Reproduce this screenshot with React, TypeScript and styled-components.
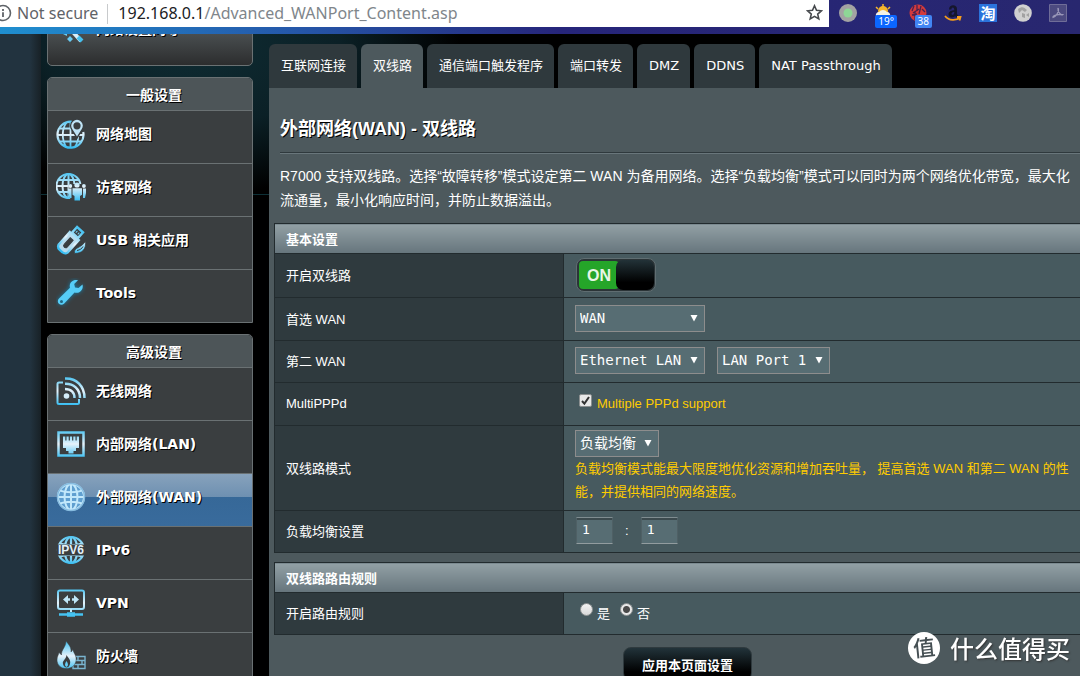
import React, { useState } from "react";
import styled, { createGlobalStyle } from "styled-components";

const sans = `"Liberation Sans", "Noto Sans CJK SC", sans-serif`;
const verdana = `"DejaVu Sans", "Noto Sans CJK SC", sans-serif`;
const mono = `"DejaVu Sans Mono", "Noto Sans CJK SC", monospace`;

const GlobalStyle = createGlobalStyle`
  *, *::before, *::after { box-sizing: border-box; }
  body { margin: 0; background: #21313c; font-family: ${sans}; color: #fff; }
  button, input, select { font: inherit; color: inherit; }
  svg text { text-shadow: none; }
`;

const Window = styled.div`
  display: flex;
  flex-direction: column;
  height: 100vh;
  overflow: hidden;
`;

/* ---------- browser bar ---------- */

const BrowserBar = styled.header`
  display: flex;
  flex: none;
  height: 34px;
  padding-bottom: 7px;
  background: linear-gradient(90deg, #1f8fd0 0, #2556a8 300px, #26257a 560px, #28276f 100%);
`;

const AddressBar = styled.div`
  display: flex;
  flex: 1;
  align-items: center;
  min-width: 0;
  padding-right: 6px;
  background: #fff;
  color: #5f6368;
  font: 16px/26px "Noto Sans", sans-serif;
`;

const InfoMark = styled.svg`
  flex: none;
  width: 18px;
  height: 18px;
  margin: 0 5px 2px -6px;
`;

const Secure = styled.span`
  padding: 0 9px 2px 0;
  border-right: 1px solid #c8cacc;
  line-height: 18px;
  white-space: nowrap;
`;

const Url = styled.span`
  flex: 1;
  padding: 0 0 2px 10px;
  color: #80868b;
  white-space: nowrap;
  b { color: #202124; font-weight: 400; }
`;

const StarButton = styled.button`
  display: flex;
  padding: 0 0 2px;
  border: 0;
  background: none;
`;

const Extensions = styled.div`
  display: flex;
  gap: 17px;
  align-items: center;
  padding: 0 13px 2px 10px;
`;

const Extension = styled.button`
  position: relative;
  width: 18px;
  height: 18px;
  padding: 0;
  border: 0;
  background: none;
  svg { display: block; width: 18px; height: 18px; }
`;

const Badge = styled.span<{ $color: string }>`
  position: absolute;
  top: 11px;
  right: -5px;
  padding: 0 3px;
  border-radius: 2px;
  background: ${(p) => p.$color};
  color: #fff;
  font: 10px/13px "Noto Sans", sans-serif;
`;

const Taobao = styled.span`
  display: block;
  height: 18px;
  background: #2b73dc;
  color: #fff;
  font: 700 15px/17px "Noto Sans CJK SC", sans-serif;
`;

/* ---------- page ---------- */

const Page = styled.div`
  display: flex;
  flex: 1;
  min-height: 0;
  overflow: hidden;
  padding-left: 41px;
  background: linear-gradient(90deg, #22333f 0, #22333f 30px, #182126 41px, transparent 41px);
`;

const Board = styled.div`
  display: flex;
  flex: 1;
  gap: 16px;
  align-items: flex-start;
  min-width: 0;
  padding-left: 6px;
  background:
    linear-gradient(#0d3036, #0d3036) 0 160px / 230px 1px no-repeat,
    radial-gradient(ellipse 270px 150px at 150px 10px, #0f2c33 0, #0b2026 55%, transparent 100%),
    #000;
`;

const Sidebar = styled.nav`
  display: flex;
  flex: none;
  flex-direction: column;
  gap: 11px;
  width: 206px;
  margin-top: -22px;
`;

const Group = styled.section`
  overflow: hidden;
  border: 1px solid #6a7173;
  border-radius: 5px 5px 0 0;
`;

const GroupTitle = styled.h2`
  margin: 0;
  padding: 2px 0 0 8px;
  background: #4d5558;
  font: 700 14px/30px ${verdana};
  text-align: center;
  text-shadow: 1px 1px 0 #000;
`;

const MenuLink = styled.a<{ $kind?: "active" | "lone" }>`
  display: flex;
  gap: 10px;
  align-items: center;
  height: 53px;
  padding: 0 8px 7px;
  border-top: 1px solid #6a7173;
  background: ${(p) =>
    p.$kind === "active"
      ? "linear-gradient(#87a2bc 0, #6e90b1 44%, #366898 45%, #396b9c 100%)"
      : p.$kind === "lone"
        ? "linear-gradient(#5c6466, #2c2d2e)"
        : "#3a3e40"};
  color: #fff;
  font: 700 14px/20px ${verdana};
  text-decoration: none;
  text-shadow: 1px 1px 0 #000;
  ${(p) =>
    p.$kind === "lone" &&
    "height: 54px; padding-bottom: 21px; border: 1px solid #6a7173; border-radius: 5px;"}
  svg { flex: none; width: 30px; height: 30px; }
`;

const Main = styled.main`
  flex: 1 0 828px;
  padding-top: 10px;
`;

const Tabs = styled.nav`
  display: flex;
  gap: 4px;
`;

const Tab = styled.a<{ $active?: boolean }>`
  height: 44px;
  padding: 0 11px 0 12px;
  border-radius: 6px 6px 0 0;
  background: ${(p) => (p.$active ? "#4d595d" : "#2f393d")};
  color: #fff;
  font: 13px/43px ${verdana};
  text-decoration: none;
  white-space: nowrap;
`;

const Panel = styled.form`
  padding: 29px 11px 40px 5px;
  background: #4d595d;
`;

const Title = styled.h1`
  margin: 0 0 0 6px;
  padding-bottom: 11px;
  border-bottom: 1px solid #2f393d;
  box-shadow: 0 1px 0 #69767b;
  font: 700 18px/24px ${sans};
  text-shadow: 1px 1px 0 #000;
`;

const Intro = styled.p`
  margin: 11px 12px 11px 6px;
  font-size: 14px;
  line-height: 24px;
`;

const Settings = styled.table`
  width: 100%;
  margin-bottom: 9px;
  border: 1px solid #222b2e;
  border-collapse: collapse;
  background: #475a5f;
  font-size: 13px;
  text-align: left;
`;

const SectionHead = styled.th`
  height: 30px;
  padding: 0 0 0 11px;
  background: linear-gradient(#92a0a5, #66757c);
  font-weight: 700;
`;

const Row = styled.tr`
  border-top: 1px solid #222b2e;
`;

const Label = styled.th`
  width: 289px;
  padding: 0 0 2px 11px;
  border-right: 1px solid #222b2e;
  background: #2f3a3e;
  font-weight: 400;
`;

const Value = styled.td<{ $height?: number }>`
  height: ${(p) => p.$height ?? 43}px;
  padding: 0 5px 2px 11px;
`;

const Controls = styled.div<{ $gap?: number; $indent?: number }>`
  display: flex;
  gap: ${(p) => p.$gap ?? 12}px;
  align-items: center;
  padding-left: ${(p) => p.$indent ?? 0}px;
`;

const SelectBox = styled.span<{ $width: number }>`
  position: relative;
  display: block;
  width: ${(p) => p.$width}px;
  select {
    display: block;
    width: 100%;
    height: 27px;
    padding: 0 4px 1px;
    border: 1px solid #8d8d8d;
    border-radius: 0;
    outline: 0;
    appearance: none;
    background: #576d73;
    font: 14px/20px ${mono};
  }
  svg {
    position: absolute;
    top: 9px;
    right: 7px;
    width: 8px;
    height: 8px;
    pointer-events: none;
  }
`;

const Switch = styled.button`
  display: flex;
  width: 80px;
  height: 34px;
  margin-left: 1px;
  padding: 1px;
  border: 1px solid #5f6d71;
  border-radius: 8px;
  background: #2b3437;
  span {
    flex: 1;
    margin: 1px -3px 1px 1px;
    border-radius: 4px;
    background: #25a529;
    color: #e8f6e6;
    font: 700 16px/29px ${sans};
    text-align: center;
  }
  i {
    z-index: 1;
    width: 38px;
    border-radius: 7px;
    background: linear-gradient(#223238, #000 75%);
  }
`;

const CheckLabel = styled.label<{ $plain?: boolean }>`
  display: flex;
  gap: ${(p) => (p.$plain ? 4 : 5)}px;
  align-items: center;
  color: ${(p) => (p.$plain ? "#fff" : "#ffcc00")};
  input {
    width: 13px;
    height: 13px;
    margin: 0 0 6px;
    border: 1px solid #8b8f90;
    border-radius: 2px;
    appearance: none;
    background: linear-gradient(#f4f4f4, #d8d8d8);
  }
  input[type="checkbox"]:checked {
    background: url("data:image/svg+xml,%3Csvg xmlns='http://www.w3.org/2000/svg' viewBox='0 0 11 11'%3E%3Cpath d='M2 6l2.4 2.6L9 2' fill='none' stroke='%23333' stroke-width='2'/%3E%3C/svg%3E") #e8e8e8;
  }
  input[type="radio"] { border-radius: 50%; }
  input[type="radio"]:checked {
    background: radial-gradient(circle, #4a4a4a 0, #4a4a4a 3px, #e8e8e8 4px);
  }
`;

const Hint = styled.p`
  margin: 0;
  color: #ffcc00;
  line-height: 23px;
`;

const ModeStack = styled.div`
  padding: 4px 0 5px;
`;

const Ratio = styled.input`
  width: 37px;
  height: 27px;
  padding: 0 5px 2px;
  border: 1px solid #4f6065;
  border-top-color: #7f8c90;
  border-bottom-color: #929c9f;
  outline: 0;
  background: #576d73;
  box-shadow: inset 0 2px 0 #3c4a4e;
  font-family: ${mono};
`;

const Actions = styled.div`
  display: flex;
  padding: 3px 0 0 349px;
`;

const Apply = styled.button`
  min-width: 129px;
  height: 34px;
  border: 1px solid #2f3a3e;
  border-radius: 8px;
  background: linear-gradient(#22333a, #000 75%);
  font-weight: 700;
  font-size: 13px;
`;

const Watermark = styled.div`
  position: fixed;
  right: 10px;
  bottom: 12px;
  display: flex;
  gap: 10px;
  align-items: center;
  font: 500 24px/32px "Noto Sans CJK SC", sans-serif;
  text-shadow: 1px 1px 2px #333;
  svg { width: 32px; height: 32px; }
`;

/* ---------- icons ---------- */

const stroke = { fill: "none", stroke: "url(#ice)", strokeWidth: 2 };

const Defs = styled.svg`
  position: absolute;
  width: 0;
  height: 0;
`;

const IceDefs = () => (
  <Defs aria-hidden="true">
    <defs>
      <linearGradient id="ice" gradientUnits="userSpaceOnUse" x1="0" y1="1" x2="0" y2="29">
        <stop offset="0" stopColor="#4cc4f2" />
        <stop offset="0.5" stopColor="#e6f2fa" />
        <stop offset="1" stopColor="#35bdf2" />
      </linearGradient>
    </defs>
  </Defs>
);

const Globe = () => (
  <>
    <circle cx="15" cy="15" r="13" />
    <ellipse cx="15" cy="15" rx="6.500" ry="13" />
    <path d="M15 2v26M2 15h26M4 8.600c6 2.200 16 2.200 22 0M4 21.400c6-2.200 16-2.200 22 0" />
  </>
);

const icons: Record<string, React.ReactNode> = {
  wand: (
    <>
      <path d="M9 9l16 18" stroke="#d8eefa" strokeWidth="4" />
      <path d="M22 23l4 4" stroke="#46c0ee" strokeWidth="4" />
      <path d="M2 17h9v5l-4-2z M14 22l3 3-3 3-3-3z M20 13l2 2-2 2-2-2z" fill="#67cbf3" />
    </>
  ),
  map: (
    <>
      <g {...stroke} strokeWidth={2.200}>
        <path d="M16 2.800A13 13 0 1 0 27.200 13" />
        <path d="M14.500 3v26M10.500 3.500c-5 7-5 17 0 25M18.500 28.500c3.500-5 4.400-10 3.200-15M1.500 16H28M4 9.500h13M4 22.500h21" strokeWidth="1.800" />
      </g>
      <path d="M21 17.500l-4.500-7.500a5.500 5.500 0 1 1 9 0z" fill="#3a3e40" stroke="#3a3e40" strokeWidth="3" />
      <path fillRule="evenodd" d="M21 17.500l-4.600-7.300a5.800 5.800 0 1 1 9.200 0zM21 3.200a3.600 3.600 0 1 0 0 7.200a3.600 3.600 0 0 0 0-7.200z" fill="#bfe3f5" />
    </>
  ),
  guest: (
    <>
      <g {...stroke} strokeWidth={2}>
        <circle cx="12.500" cy="14" r="12" />
        <ellipse cx="12.500" cy="14" rx="6" ry="12" />
        <path d="M12.500 2v24M.5 14h24M2.500 8h20M2.500 20h20" />
      </g>
      <path d="M13 12h17v16H15l-3-6z" fill="#3a3e40" />
      <g fill="url(#ice)">
        <circle cx="21" cy="13" r="2.600" />
        <path d="M16.500 16.300h9.500v6.500l-2 1.200v4.500h-5.500V24l-2-1.200zM12 16.500h3.500v9.500h-2l-1.500-5zM27 16.500h3v4.500l-1 5h-2z" />
        <circle cx="14.300" cy="14" r="1.900" />
        <circle cx="27.900" cy="14" r="1.900" />
      </g>
    </>
  ),
  usb: (
    <>
      <g transform="rotate(42 13 17)" {...stroke} strokeWidth={2.400}>
        <path d="M9 .5h8V8H9z" />
        <path d="M11.300 4.300h1M13.900 4.300h1" />
        <path d="M7 9h12v15a4 4 0 0 1-4 5h-4a4 4 0 0 1-4-5z" fill="#b9dcee" />
        <path d="M11 13h4v9a2 2 0 0 1-4 0z" fill="#3a3e40" stroke="#3a3e40" strokeWidth="1" />
      </g>
      <path d="M29.500 16c1 8-3 12.500-11 12.500-1.500-6.500 7-5 11-12.500z" fill="url(#ice)" stroke="#3a3e40" strokeWidth=".8" />
      <path d="M21 25.500c3-.5 5-2 6-4" fill="none" stroke="#3a3e40" />
    </>
  ),
  tools: (
    <path
      d="M26.500 6.500l-4 3.500-3.500-.6-.8-3.500L22 2.300c-5-1.300-9.300 2.600-8 7.500L3 20.500c-3.500 3.500 1.500 8.500 5 5.200L18.500 14.500c5 1.500 9.400-3 8-8zM5.500 22a1.500 1.500 0 1 1 0 3a1.500 1.500 0 0 1 0-3z"
      fill="#56cdf7"
      fillRule="evenodd"
      filter="drop-shadow(0 0 2px #1481ad)"
    />
  ),
  wifi: (
    <g {...stroke} strokeWidth={2}>
      <path d="M7 6.500H3q-1.500 0-1.500 1.500v18.500q0 1.500 1.500 1.500h18.500q1.500 0 1.500-1.500V23" />
      <path d="M9 2.500C20.500 2 28.500 10 28.500 22M9 7.800C17.500 7.500 24 13 24 22M9 13c6 0 9.500 3.500 9.500 9" strokeWidth="2.500" />
      <circle cx="10.500" cy="20" r="2.800" fill="#d5ecf8" stroke="none" />
    </g>
  ),
  lan: (
    <>
      <path d="M2.500 3.500h25v23h-25z" {...stroke} strokeWidth={2.500} />
      <path
        d="M7 7.500h2.300v4h1.200v-4h2.200v4h1.200v-4h2.200v4h1.200v-4h2.200v4h1.200v-4H23V19h-3v3h-2.500v2.500h-5V22H10v-3H7z"
        fill="url(#ice)"
      />
    </>
  ),
  wan: (
    <>
      <circle cx="15" cy="15" r="13" fill="#5f9fd0" />
      <g fill="none" stroke="#c2e8fb" strokeWidth="2">
        <Globe />
      </g>
      <circle cx="15" cy="15" r="13.500" fill="none" stroke="#86bce0" strokeWidth="1.500" />
    </>
  ),
  ipv6: (
    <>
      <g {...stroke} strokeWidth={2.200}>
        <Globe />
      </g>
      <path d="M1 9.500h28v11H1z" fill="#3a3e40" />
      <text x="15" y="19" textAnchor="middle" fontFamily="Liberation Sans" fontWeight="700" fontSize="12" fill="#e3f1f9">
        IPV6
      </text>
    </>
  ),
  vpn: (
    <>
      <rect x="2" y="2.500" width="26" height="18.500" rx="2" {...stroke} />
      <path d="M7 11.500l5-4.500v3.200h2v2.600h-2V16zM23 11.500l-5-4.500v3.200h-2v2.600h2V16z" fill="#bfe6f8" />
      <path d="M14 21h2v3h-2z" fill="#bfe6f8" />
      <path d="M3 26.500h24" stroke="#45c3f2" strokeWidth="2.500" />
      <path d="M11 26.500h8" stroke="#45c3f2" strokeWidth="4.500" />
    </>
  ),
  firewall: (
    <>
      <path d="M17 15.500h12v12H17zM17 19.500h12M17 23.500h12M22 15.500v4M26 19.500v4M22 23.500v4" fill="none" stroke="#79b4cf" strokeWidth="1.400" />
      <path
        fill="url(#ice)"
        stroke="#3a3e40"
        strokeWidth=".5"
        d="M10 0c3 4 5.500 6.500 5 11l2-2.500c0 3 4 6 3 11.500-1 5-5 7.500-10 7.500S1 24 1 19c0-3.500 1.500-5 2-7.500l2.500 2.500C5 9 10 6 10 0z"
      />
      <path fill="#3a3e40" d="M10.500 14c2 3.500 4.500 5 3.500 9-.6 2.500-2 3.500-3.500 3.500S7.500 25 7 23c-1-3.500 3-4 3.500-9z" />
      <path fill="#62cdf5" d="M10.500 20c2 3 2 5 0 6-2-1-2-3 0-6z" />
    </>
  ),
};

const Icon = ({ name }: { name: string }) => (
  <svg viewBox="0 0 30 30" aria-hidden="true">
    {icons[name]}
  </svg>
);

const Select = ({ width, label, options }: { width: number; label: string; options: string[] }) => (
  <SelectBox $width={width}>
    <select aria-label={label}>
      {options.map((o) => (
        <option key={o}>{o}</option>
      ))}
    </select>
    <svg viewBox="0 0 8 8" aria-hidden="true">
      <path d="M.5 1h7L4 7.500z" fill="#fff" />
    </svg>
  </SelectBox>
);

const general = [
  ["map", "网络地图"],
  ["guest", "访客网络"],
  ["usb", "USB 相关应用"],
  ["tools", "Tools"],
];

const advanced = [
  ["wifi", "无线网络"],
  ["lan", "内部网络(LAN)"],
  ["wan", "外部网络(WAN)"],
  ["ipv6", "IPv6"],
  ["vpn", "VPN"],
  ["firewall", "防火墙"],
];

const tabs = ["互联网连接", "双线路", "通信端口触发程序", "端口转发", "DMZ", "DDNS", "NAT Passthrough"];

const Menu = ({ title, items }: { title: string; items: string[][] }) => (
  <Group>
    <GroupTitle>{title}</GroupTitle>
    {items.map(([icon, text]) => (
      <MenuLink key={icon} href="#" $kind={icon === "wan" ? "active" : undefined}>
        <Icon name={icon} />
        {text}
      </MenuLink>
    ))}
  </Group>
);

const ExtensionBar = () => (
  <Extensions>
    <Extension aria-label="Status">
      <svg viewBox="0 0 18 18">
        <circle cx="9" cy="9" r="9" fill="#a3a3a3" />
        <circle cx="9" cy="9" r="4.500" fill="#8ed796" />
      </svg>
    </Extension>
    <Extension aria-label="Weather">
      <svg viewBox="0 0 18 18">
        <circle cx="9" cy="7" r="5" fill="#f5b52c" />
        <path d="M9 0v3M2 3l2 2M16 3l-2 2" stroke="#f5b52c" strokeWidth="1.500" />
        <path d="M2 12a3 3 0 0 1 3-4 5 5 0 0 1 8 0 3 3 0 0 1 3 4z" fill="#f4f1e6" />
      </svg>
      <Badge $color="#0b66ff">19°</Badge>
    </Extension>
    <Extension aria-label="Notifications">
      <svg viewBox="0 0 18 18">
        <circle cx="9" cy="9" r="8.500" fill="#d33a3c" />
        <path d="M5 2l-2 5M8 1v6M4 9l6-4M12 2l-2 8M13 5l3 3M3 11l5-1M6 8v8" stroke="#4a2250" strokeWidth="1.300" />
      </svg>
      <Badge $color="#4285f4">38</Badge>
    </Extension>
    <Extension aria-label="Amazon">
      <svg viewBox="0 0 18 18">
        <path d="M5 5.500C5 0 13 0 13 5v5l1.500 2-2 1.500-1.500-1.500c-2 2.500-6.500 1.500-6.500-1.500C4.500 7 8 6.500 10.300 6.300 10.500 2.500 7.500 3 7.300 5.500zM10.300 8c-4 0-3 3.500-1.300 2.800 1-.4 1.300-1.300 1.300-2.800z" fill="#15162c" />
        <path d="M1 12c4 5 11 5 15 1.500M13 13h3.500l-1 3.500" fill="none" stroke="#f59d1b" strokeWidth="1.800" />
      </svg>
    </Extension>
    <Extension aria-label="Taobao">
      <Taobao>淘</Taobao>
    </Extension>
    <Extension aria-label="Profile">
      <svg viewBox="0 0 18 18">
        <circle cx="9" cy="9" r="8.800" fill="#d0d0d0" />
        <path d="M4 5c4-3 6-2 9 1l-2 2-3-2-3 3zM8 9l3 1v4l-3-1zM12 11l3-2v4z" fill="#a2a2a2" />
      </svg>
    </Extension>
    <Extension aria-label="Acrobat">
      <svg viewBox="0 0 18 18">
        <path d="M.5.5h17v17H.5z" fill="#4c4a80" stroke="#6f6d98" />
        <path d="M9 4c2 4-3 9-5 9.500-1-2 5-3.500 10-3-1 2-6-3-5-6.500" fill="none" stroke="#9997b8" strokeWidth="1.200" />
      </svg>
    </Extension>
  </Extensions>
);

export default function App() {
  const [on, setOn] = useState(true);
  return (
    <Window>
      <GlobalStyle />
      <IceDefs />
      <BrowserBar>
        <AddressBar>
          <InfoMark viewBox="0 0 18 18">
            <circle cx="9" cy="9" r="7.500" fill="none" stroke="#5f6368" strokeWidth="1.600" />
            <path d="M9 5v2M9 8.200V13" stroke="#5f6368" strokeWidth="1.800" />
          </InfoMark>
          <Secure>Not secure</Secure>
          <Url>
            <b>192.168.0.1</b>/Advanced_WANPort_Content.asp
          </Url>
          <StarButton aria-label="Bookmark this page">
            <svg width="17" height="17" viewBox="0 0 17 17">
              <path d="M8.500 1.800l2 4.500 4.900.5-3.700 3.300 1.100 4.800-4.300-2.500-4.300 2.500 1.100-4.800L1.600 6.800l4.900-.5z" fill="none" stroke="#46494d" strokeWidth="1.600" />
            </svg>
          </StarButton>
        </AddressBar>
        <ExtensionBar />
      </BrowserBar>

      <Page>
        <Board>
          <Sidebar>
            <MenuLink href="#" $kind="lone">
              <Icon name="wand" />
              网络设置向导
            </MenuLink>
            <Menu title="一般设置" items={general} />
            <Menu title="高级设置" items={advanced} />
          </Sidebar>

          <Main>
            <Tabs>
              {tabs.map((t, i) => (
                <Tab key={t} href="#" $active={i === 1}>
                  {t}
                </Tab>
              ))}
            </Tabs>
            <Panel onSubmit={(e) => e.preventDefault()}>
              <Title>外部网络(WAN) - 双线路</Title>
              <Intro>
                R7000 支持双线路。选择“故障转移”模式设定第二 WAN 为备用网络。选择“负载均衡”模式可以同时为两个网络优化带宽，最大化流通量，最小化响应时间，并防止数据溢出。
              </Intro>

              <Settings>
                <thead>
                  <tr>
                    <SectionHead colSpan={2}>基本设置</SectionHead>
                  </tr>
                </thead>
                <tbody>
                  <Row>
                    <Label scope="row">开启双线路</Label>
                    <Value $height={44}>
                      <Switch type="button" role="switch" aria-checked={on} aria-label="开启双线路" onClick={() => setOn(!on)}>
                        <span>{on ? "ON" : "OFF"}</span>
                        <i />
                      </Switch>
                    </Value>
                  </Row>
                  <Row>
                    <Label scope="row">首选 WAN</Label>
                    <Value>
                      <Select width={130} label="首选 WAN" options={["WAN"]} />
                    </Value>
                  </Row>
                  <Row>
                    <Label scope="row">第二 WAN</Label>
                    <Value $height={42}>
                      <Controls>
                        <Select width={130} label="第二 WAN" options={["Ethernet LAN"]} />
                        <Select width={113} label="LAN Port" options={["LAN Port 1"]} />
                      </Controls>
                    </Value>
                  </Row>
                  <Row>
                    <Label scope="row">MultiPPPd</Label>
                    <Value>
                      <Controls $indent={4}>
                        <CheckLabel>
                          <input type="checkbox" defaultChecked />
                          Multiple PPPd support
                        </CheckLabel>
                      </Controls>
                    </Value>
                  </Row>
                  <Row>
                    <Label scope="row">双线路模式</Label>
                    <Value>
                      <ModeStack>
                        <Select width={84} label="双线路模式" options={["负载均衡"]} />
                        <Hint>
                          负载均衡模式能最大限度地优化资源和增加吞吐量， 提高首选 WAN 和第二 WAN 的性能，并提供相同的网络速度。
                        </Hint>
                      </ModeStack>
                    </Value>
                  </Row>
                  <Row>
                    <Label scope="row">负载均衡设置</Label>
                    <Value $height={42}>
                      <Controls $gap={12} $indent={1}>
                        <Ratio aria-label="首选 WAN 权重" defaultValue="1" />
                        :
                        <Ratio aria-label="第二 WAN 权重" defaultValue="1" />
                      </Controls>
                    </Value>
                  </Row>
                </tbody>
              </Settings>

              <Settings>
                <thead>
                  <tr>
                    <SectionHead colSpan={2}>双线路路由规则</SectionHead>
                  </tr>
                </thead>
                <tbody>
                  <Row>
                    <Label scope="row">开启路由规则</Label>
                    <Value $height={42}>
                      <Controls $gap={10} $indent={5}>
                        <CheckLabel $plain>
                          <input type="radio" name="rules" />是
                        </CheckLabel>
                        <CheckLabel $plain>
                          <input type="radio" name="rules" defaultChecked />否
                        </CheckLabel>
                      </Controls>
                    </Value>
                  </Row>
                </tbody>
              </Settings>

              <Actions>
                <Apply type="submit">应用本页面设置</Apply>
              </Actions>
            </Panel>
          </Main>
        </Board>
      </Page>

      <Watermark>
        <svg viewBox="0 0 32 32">
          <circle cx="16" cy="16" r="16" fill="#fff" />
          <text x="16" y="24" textAnchor="middle" fontSize="22" fontWeight="500" fill="#454f53" transform="rotate(-6 16 16)">
            值
          </text>
        </svg>
        什么值得买
      </Watermark>
    </Window>
  );
}
